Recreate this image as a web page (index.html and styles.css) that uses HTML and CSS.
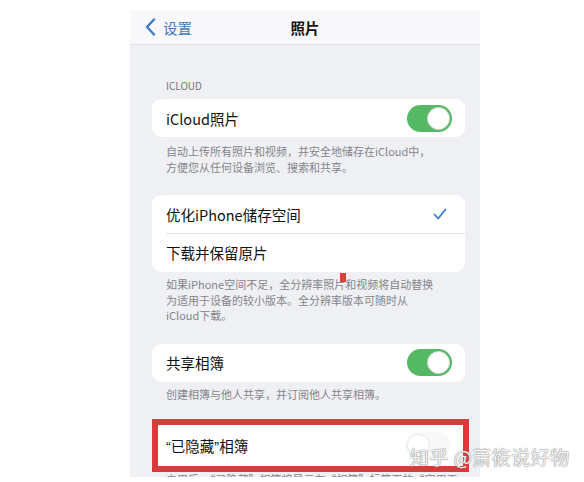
FILE: index.html
```html
<!doctype html>
<html lang="zh-CN">
<head>
  <meta charset="utf-8">
  <title>照片</title>
  <link rel="stylesheet" href="styles.css">
</head>
<body>

<div class="phone">
  <div class="nav">
    <a class="nav-back">
      <svg width="11" height="18" viewBox="0 0 11 18"><path d="M9 1.5 L2 9 L9 16.5" fill="none" stroke="currentColor" stroke-width="2.4" stroke-linecap="round" stroke-linejoin="round"/></svg>
      <span>设置</span>
    </a>
    <div class="nav-title">照片</div>
  </div>

  <div class="group-header">ICLOUD</div>
  <div class="card">
    <div class="row">
      <span class="row-label">iCloud照片</span>
      <span class="switch switch-on"></span>
    </div>
  </div>
  <div class="group-footer">自动上传所有照片和视频，并安全地储存在iCloud中，<br>方便您从任何设备浏览、搜索和共享。</div>

  <div class="card card-gap">
    <div class="row">
      <span class="row-label">优化iPhone储存空间</span>
      <svg class="check" width="14" height="12" viewBox="0 0 14 12"><path d="M1.5 6.5 L5.2 10.5 L12.5 1.5" fill="none" stroke="currentColor" stroke-width="1.8" stroke-linecap="round" stroke-linejoin="round"/></svg>
    </div>
    <div class="row row-divided">
      <span class="row-label">下载并保留原片</span>
    </div>
    <span class="mark"></span>
  </div>
  <div class="group-footer footer-tight">如果iPhone空间不足，全分辨率照片和视频将自动替换<br>为适用于设备的较小版本。全分辨率版本可随时从<br>iCloud下载。</div>

  <div class="card card-gap">
    <div class="row">
      <span class="row-label">共享相簿</span>
      <span class="switch switch-on"></span>
    </div>
  </div>
  <div class="group-footer footer-tight">创建相簿与他人共享，并订阅他人共享相簿。</div>

  <div class="card card-marked">
    <div class="row">
      <span class="row-label"><span class="quote">“</span>已隐藏<span class="quote">”</span>相簿</span>
      <span class="switch switch-faded"></span>
    </div>
  </div>
  <div class="group-footer footer-cut">启用后，“已隐藏”相簿将显示在“相簿”标签页的“实用工具”中。</div>
</div>

<div class="watermark">知乎 @萧筱说好物</div>

</body>
</html>
```

FILE: styles.css
```css
html {
  background-color: #fff;
}

body {
  margin: 0;
  font-family: "Noto Sans CJK SC", "Noto Sans", sans-serif;
  color: #111;
}

/* Phone screenshot panel */
.phone {
  position: relative;
  margin: 10px 0 0 130px;
  width: 350px;
  height: 467px;
  overflow: hidden;
  background-color: #eff0f4;
}

.nav {
  position: relative;
  display: flex;
  align-items: center;
  height: 34px;
  padding-left: 15px;
  background-color: #f8f8fa;
  border-bottom: 1px solid #dedee2;
}

.nav-back {
  display: flex;
  align-items: center;
  gap: 7px;
  color: #4079c2;
  font-size: 14.5px;
}

.nav-title {
  position: absolute;
  left: 0;
  right: 0;
  text-align: center;
  font-size: 14.5px;
  font-weight: bold;
  pointer-events: none;
}

.group-header {
  margin: 34px 0 6px 36px;
  font-size: 10px;
  line-height: 14px;
  color: #76767b;
}

.card {
  position: relative;
  margin: 0 15px 0 22px;
  background-color: #fff;
  border-radius: 9px;
}

.card-gap {
  margin-top: 20px;
}

.row {
  display: flex;
  align-items: center;
  justify-content: space-between;
  height: 38px;
  padding: 0 13px 0 14px;
  font-size: 14.5px;
}

.row-divided {
  position: relative;
  height: 39px;
}

.row-divided::before {
  content: "";
  position: absolute;
  top: 0;
  left: 14px;
  right: 0;
  border-top: 1px solid #e2e2e6;
}

.quote {
  font-family: "Liberation Sans", sans-serif;
}

.check {
  color: #3b7dd0;
  margin-right: 5px;
}

/* little red speck left over in the screenshot */
.mark {
  position: absolute;
  left: 188px;
  bottom: -10px;
  width: 6px;
  height: 9px;
  background-color: #d8403f;
}

.switch {
  position: relative;
  width: 45px;
  height: 27px;
  border-radius: 14px;
  box-sizing: border-box;
}

.switch::after {
  content: "";
  position: absolute;
  top: 2px;
  right: 2px;
  width: 23px;
  height: 23px;
  border-radius: 50%;
  background-color: #fff;
  box-sizing: border-box;
  border: 1px solid #d6d6d6;
}

.switch-on {
  background-color: #55b865;
}

.switch-faded {
  background-color: #f4f4f4;
  opacity: 0.6;
}

.switch-faded::after {
  left: 2px;
  right: auto;
}

.group-footer {
  margin: 7px 20px 0 36px;
  font-size: 11px;
  line-height: 15.5px;
  color: #85858a;
}

.footer-tight {
  margin-top: 5px;
}

.card-marked {
  margin-top: 17px;
  margin-right: 11px;
  border: 6px solid #d93a3b;
  border-radius: 0;
}

.card-marked .row {
  height: 41px;
  padding-left: 8px;
}

.footer-cut {
  margin-top: 0;
  line-height: 14px;
}

/* site watermark */
.watermark {
  position: absolute;
  left: 410px;
  top: 443px;
  font-size: 19px;
  letter-spacing: 0.5px;
  color: rgba(255, 255, 255, 0.92);
  text-shadow: 0 0 1px #7e7e7e, 0 0 1px #7e7e7e;
}
```
